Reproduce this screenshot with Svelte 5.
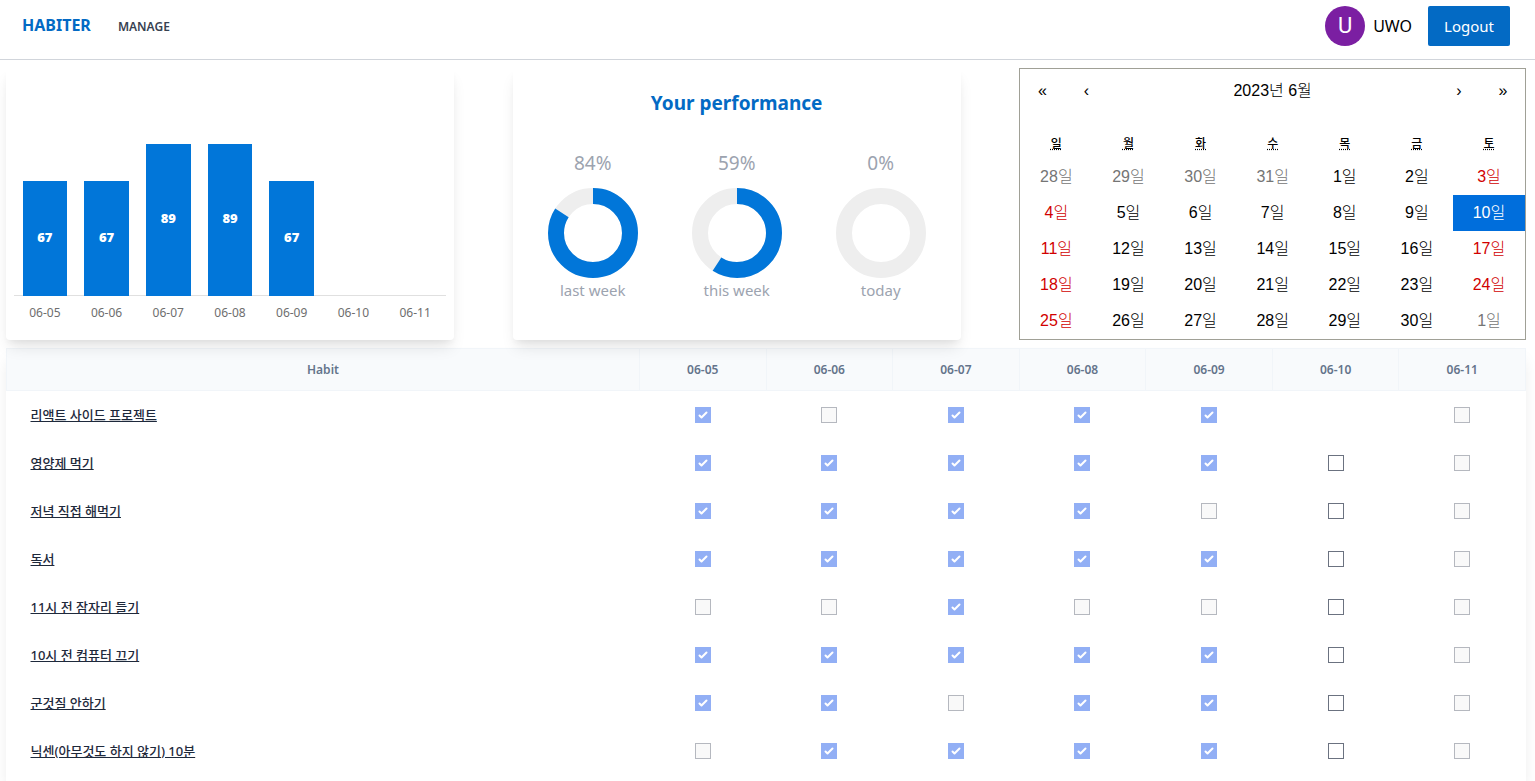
<script>
  const days = ['06-05', '06-06', '06-07', '06-08', '06-09', '06-10', '06-11'];
  const rates = [67, 67, 89, 89, 67, 0, 0];

  const rings = [
    { label: 'last week', value: 84 },
    { label: 'this week', value: 59 },
    { label: 'today', value: 0 }
  ];
  const circumference = 2 * Math.PI * 37;

  const weekdays = [
    ['일', '일요일'],
    ['월', '월요일'],
    ['화', '화요일'],
    ['수', '수요일'],
    ['목', '목요일'],
    ['금', '금요일'],
    ['토', '토요일']
  ];
  const tiles = Array.from({ length: 35 }, (_, i) => {
    const n = i - 3;
    const outside = n < 1 || n > 30;
    const day = n < 1 ? n + 31 : n > 30 ? n - 30 : n;
    return { day, outside, weekend: !outside && (i % 7 === 0 || i % 7 === 6) };
  });
  let selected = $state(13);

  // x: done, o: missed or upcoming, -: nothing scheduled; index 5 is today
  const habits = $state(
    [
      ['리액트 사이드 프로젝트', 'xoxxx-o'],
      ['영양제 먹기', 'xxxxxoo'],
      ['저녁 직접 해먹기', 'xxxxooo'],
      ['독서', 'xxxxxoo'],
      ['11시 전 잠자리 들기', 'ooxoooo'],
      ['10시 전 컴퓨터 끄기', 'xxxxxoo'],
      ['군것질 안하기', 'xxoxxoo'],
      ['닉센(아무것도 하지 않기) 10분', 'oxxxxoo']
    ].map(([name, marks]) => ({
      name,
      marks: [...marks].map((m) => ({ shown: m !== '-', done: m === 'x' }))
    }))
  );
</script>

<header>
  <nav>
    <a class="brand" href="#home">HABITER</a>
    <a class="link" href="#manage">MANAGE</a>
  </nav>
  <div class="account">
    <span class="avatar" aria-hidden="true">U</span>
    <span class="user">UWO</span>
    <button class="logout" type="button">Logout</button>
  </div>
</header>

<main>
  <div class="panels">
    <section class="card chart">
      <div class="plot">
        {#each rates as rate}
          <div class="slot">
            {#if rate}
              <div class="bar" style="height: {rate}%">{rate}</div>
            {/if}
          </div>
        {/each}
      </div>
      <div class="axis">
        {#each days as day}<span>{day}</span>{/each}
      </div>
    </section>

    <section class="card performance">
      <h2>Your performance</h2>
      <div class="rings">
        {#each rings as ring}
          <div class="ring">
            <span class="percent">{ring.value}%</span>
            <svg viewBox="0 0 90 90" aria-hidden="true">
              <circle cx="45" cy="45" r="37" stroke="#eee" />
              {#if ring.value}
                <circle
                  cx="45"
                  cy="45"
                  r="37"
                  stroke="#0176d9"
                  stroke-dasharray="{(circumference * ring.value) / 100} {circumference}"
                  transform="rotate(-90 45 45)"
                />
              {/if}
            </svg>
            <span class="caption">{ring.label}</span>
          </div>
        {/each}
      </div>
    </section>

    <section class="calendar">
      <div class="month">
        <button type="button" aria-label="이전 해">«</button>
        <button type="button" aria-label="이전 달">‹</button>
        <button type="button" class="title">2023년 6월</button>
        <button type="button" aria-label="다음 달">›</button>
        <button type="button" aria-label="다음 해">»</button>
      </div>
      <div class="week names">
        {#each weekdays as [short, long]}
          <div><abbr title={long}>{short}</abbr></div>
        {/each}
      </div>
      <div class="week">
        {#each tiles as tile, i}
          <button
            type="button"
            class="tile"
            class:outside={tile.outside}
            class:weekend={tile.weekend}
            class:selected={i === selected}
            onclick={() => (selected = i)}>{tile.day}일</button>
        {/each}
      </div>
    </section>
  </div>

  <div class="sheet">
    <table>
      <thead>
        <tr>
          <th class="habit">Habit</th>
          {#each days as day}<th>{day}</th>{/each}
        </tr>
      </thead>
      <tbody>
        {#each habits as habit}
          <tr>
            <td class="name"><a href="#habit">{habit.name}</a></td>
            {#each habit.marks as mark, i}
              <td>
                {#if mark.shown}
                  <input
                    type="checkbox"
                    aria-label="{habit.name} {days[i]}"
                    bind:checked={mark.done}
                    disabled={i !== 5}
                  />
                {/if}
              </td>
            {/each}
          </tr>
        {/each}
      </tbody>
    </table>
  </div>
</main>

<style>
  :global(body) {
    margin: 0;
    background: #fff;
    overflow-x: hidden;
    font-family: 'Noto Sans', 'Noto Sans CJK KR', sans-serif;
    font-size: 15px;
    line-height: 24px;
    color: #000;
  }
  :global(*) {
    box-sizing: border-box;
  }
  button {
    border: 0;
    margin: 0;
    padding: 0;
    background: none;
    font: inherit;
    color: inherit;
    cursor: pointer;
  }
  a {
    color: inherit;
    text-decoration: none;
  }

  header {
    display: flex;
    justify-content: space-between;
    align-items: center;
    padding: 6px 25px 13px 22px;
    border-bottom: 1px solid #d1d5db;
  }
  nav,
  .account {
    display: flex;
    align-items: center;
  }
  nav {
    align-items: baseline;
    gap: 27px;
  }
  .brand {
    font-size: 16px;
    font-weight: 700;
    color: #036ac4;
  }
  .link {
    font-size: 12px;
    font-weight: 600;
    color: #374151;
  }
  .avatar {
    width: 40px;
    height: 40px;
    border-radius: 50%;
    background: #7b1fa2;
    color: #fff;
    font: 22px/40px Roboto, sans-serif;
    text-align: center;
  }
  .user {
    margin: 0 16px 0 8px;
    font-size: 16px;
  }
  .logout {
    height: 40px;
    padding: 0 16px;
    border-radius: 2px;
    background: #036ac4;
    color: #fff;
  }

  main {
    padding: 8px 9px 0 6px;
  }
  .panels {
    display: grid;
    grid-template-columns: repeat(3, 1fr);
  }
  .card {
    max-width: 448px;
    padding: 8px;
    border-radius: 4px;
    background: #fff;
    box-shadow:
      0 10px 15px -3px rgba(0, 0, 0, 0.1),
      0 4px 6px -2px rgba(0, 0, 0, 0.05);
  }

  .chart {
    display: flex;
    flex-direction: column;
    justify-content: flex-end;
  }
  .plot,
  .axis {
    display: grid;
    grid-template-columns: repeat(7, 1fr);
  }
  .plot {
    height: 171px;
    box-shadow: inset 0 -1px #e0e0e0;
  }
  .slot {
    display: flex;
    align-items: flex-end;
    justify-content: center;
  }
  .bar {
    display: flex;
    align-items: center;
    justify-content: center;
    width: 72%;
    background: #0176d9;
    color: #fff;
    font: 800 13px/18px 'Open Sans', sans-serif;
    padding-bottom: 4px;
  }
  .axis {
    padding: 9px 0 11px;
    height: 36px;
    font: 12px/16px 'Noto Sans', sans-serif;
    color: #6e6e6e;
    text-align: center;
  }

  h2 {
    margin: 0;
    padding-top: 13px;
    font-size: 19px;
    font-weight: 700;
    line-height: 28px;
    color: #036ac4;
    text-align: center;
  }
  .rings {
    display: grid;
    grid-template-columns: repeat(3, 1fr);
    padding-top: 32px;
    color: #9ca3af;
  }
  .ring {
    display: flex;
    flex-direction: column;
    align-items: center;
  }
  .percent {
    font-size: 19px;
    line-height: 28px;
  }
  .ring svg {
    width: 90px;
    height: 90px;
    margin-top: 11px;
    fill: none;
    stroke-width: 16;
  }

  .calendar {
    border: 1px solid #a0a096;
    background: #fff;
    font-family: 'Liberation Sans', 'Noto Sans CJK KR', sans-serif;
    font-size: 16px;
    font-weight: 300;
    line-height: 18px;
  }
  .month {
    display: flex;
    height: 44px;
    margin-bottom: 16px;
  }
  .month button {
    width: 44px;
  }
  .month .title {
    flex: 1;
  }
  .week {
    display: grid;
    grid-template-columns: repeat(7, 1fr);
  }
  .names {
    height: 30px;
    font-size: 12px;
    font-weight: 500;
    line-height: 30px;
    text-align: center;
  }
  abbr {
    text-decoration: underline dotted;
  }
  .tile {
    height: 36px;
  }
  .weekend {
    color: #d10000;
  }
  .outside {
    color: #757575;
  }
  .selected {
    background: #006edc;
    color: #fff;
  }

  .sheet {
    margin-top: 8px;
    min-height: calc(100vh - 348px);
    background: #fff;
    box-shadow: 0 10px 15px -3px rgba(0, 0, 0, 0.1);
  }
  table {
    width: 100%;
    table-layout: fixed;
    border-collapse: collapse;
    font-size: 13px;
    line-height: 16px;
  }
  th {
    height: 42px;
    padding: 0;
    border: 1px solid #f1f5f9;
    background: #f8fafc;
    font-size: 12px;
    font-weight: 600;
    color: #64748b;
  }
  .habit {
    width: 41.67%;
  }
  td {
    height: 48px;
    padding: 0;
    text-align: center;
  }
  .name {
    padding: 0 24px;
    text-align: left;
    font-weight: 500;
    color: #1e293b;
  }
  .name a {
    text-decoration: underline;
  }
  input {
    appearance: none;
    display: block;
    width: 16px;
    height: 16px;
    margin: 0 auto;
    border: 1px solid #6b7280;
    background: #fff;
  }
  input:disabled {
    border-color: #b5b8bf;
    background-color: #f9f9f9;
  }
  input:checked {
    border-color: transparent;
    background: #2563eb
      url("data:image/svg+xml,%3Csvg viewBox='0 0 16 16' fill='white' xmlns='http://www.w3.org/2000/svg'%3E%3Cpath d='M12.207 4.793a1 1 0 010 1.414l-5 5a1 1 0 01-1.414 0l-2-2a1 1 0 011.414-1.414L6.5 9.086l4.293-4.293a1 1 0 011.414 0z'/%3E%3C/svg%3E")
      center / 100% 100% border-box;
  }
  input:checked:disabled {
    background-color: #92aff5;
  }
</style>
